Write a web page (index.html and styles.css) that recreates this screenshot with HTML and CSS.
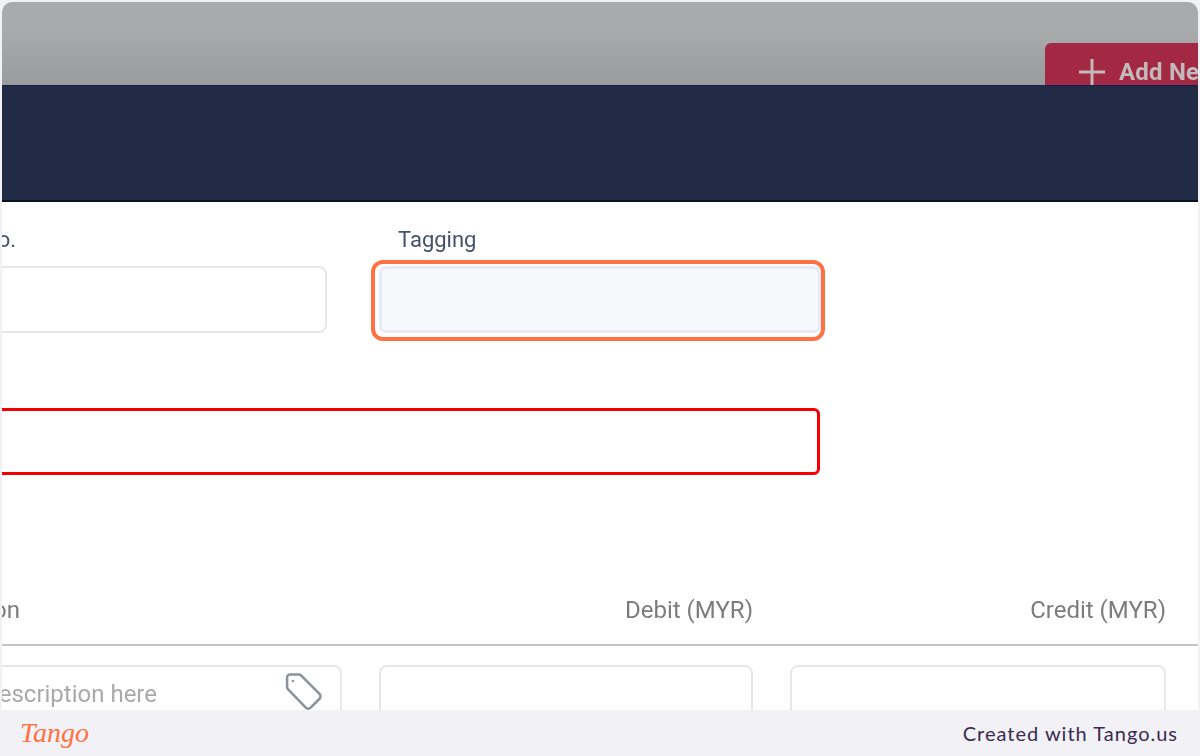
FILE: index.html
```html
<!DOCTYPE html>
<html lang="en">
<head>
<meta charset="utf-8">
<title>Tagging</title>
<link rel="stylesheet" href="styles.css">
</head>
<body>
<div class="frame">
  <main class="screen">
    <header class="dim-bar">
      <button class="add-btn" type="button">
        <svg class="plus" width="26" height="26" viewBox="0 0 26 26" aria-hidden="true"><path d="M13 0V26M0 13H26" fill="none" stroke="#c3b9bb" stroke-width="3"/></svg>
        <span>Add New</span>
      </button>
    </header>
    <div class="navy-bar"></div>
    <section class="form">
      <div class="form-row">
        <div class="field field-ref">
          <label class="label label-clip"><span>Reference No.</span></label>
          <div class="input input-ref"></div>
        </div>
        <div class="field field-tag">
          <label class="label label-tag">Tagging</label>
          <div class="highlight"><div class="input input-focus"></div></div>
        </div>
      </div>
      <div class="input input-error"></div>
      <div class="table-head">
        <div class="th th-desc"><span>Description</span></div>
        <div class="th">Debit (MYR)</div>
        <div class="th">Credit (MYR)</div>
      </div>
      <div class="table-row">
        <div class="input cell cell-desc">
          <span class="placeholder">Enter description here</span>
          <svg class="tag" width="42" height="42" viewBox="0 0 36 36" aria-hidden="true"><path d="M3.5 5.5a2.5 2.5 0 0 1 2.5-2.5h7.5a3 3 0 0 1 2.2.9l15.6 15.7a3 3 0 0 1 0 4.2l-7.6 7.6a3 3 0 0 1-4.2 0L4.4 15.7a3 3 0 0 1-.9-2.2z" fill="none" stroke="#8d929b" stroke-width="2.2" stroke-linejoin="round"/><circle cx="8.5" cy="8.5" r="1.1" fill="#8d929b"/></svg>
        </div>
        <div class="input cell"></div>
        <div class="input cell"></div>
      </div>
    </section>
  </main>
  <footer class="tango-bar">
    <span class="tango-logo">Tango</span>
    <span class="tango-credit">Created with Tango.us</span>
  </footer>
</div>
</body>
</html>
```
FILE: styles.css
```css
* { box-sizing: border-box; }
html, body { margin: 0; padding: 0; height: 756px; overflow: hidden; }
body { background: #f2f1f6; font-family: Roboto, "Liberation Sans", sans-serif; }
.frame { width: 1200px; height: 756px; display: flex; flex-direction: column; }
.screen { flex: 0 0 708px; margin: 2px 2px 0; overflow: hidden; background: #fff; border-radius: 10px 10px 0 0; filter: blur(0.35px); }
.dim-bar { height: 83px; background: linear-gradient(#a9aaab 35%, #9a9b9c); display: flex; justify-content: flex-end; align-items: flex-start; overflow: hidden; padding-top: 41px; }
.add-btn { flex: 0 0 153px; height: 60px; background: #a32843; border: 0; border-radius: 6px 0 0 0; display: flex; align-items: flex-start; gap: 14px; padding: 14px 0 0 34px; color: #c3b9bb; font: 700 24px/30px Roboto, sans-serif; letter-spacing: 0.2px; white-space: nowrap; overflow: hidden; }
.plus { flex: none; margin-top: 2px; }
.navy-bar { height: 117px; background: #212b46; border-top: 1px solid #15204a; border-bottom: 2px solid #0d1220; }
.form { padding-top: 25px; }
.form-row { display: flex; gap: 44px; }
.field { display: flex; flex-direction: column; min-width: 0; }
.field-ref { flex: 0 0 325px; }
.label { font-size: 22px; line-height: 26px; color: #46506b; height: 39px; }
.label-clip { display: flex; justify-content: flex-end; padding-right: 311px; white-space: nowrap; }
.label-tag { padding-left: 27px; }
.input { border: 2px solid #e6e7ea; border-radius: 8px; background: #fff; }
.input-ref { height: 67px; margin-left: -40px; }
.field-tag { flex: 0 0 454px; }
.highlight { height: 81px; margin-top: -6px; border: 4px solid #ff7142; border-radius: 12px; padding: 2px 0 0 4px; }
.input-focus { width: 442px; height: 67px; background: #f6f8fc; border: 3px solid #e6eaf3; border-radius: 7px; }
.input-error { width: 858px; height: 67px; margin: 67px 0 0 -40px; border: 3px solid #f40000; border-radius: 6px; }
.table-head { display: grid; grid-template-columns: 340px 374px 376px; column-gap: 37px; margin-top: 120px; height: 51px; border-bottom: 2px solid #c4c4c4; }
.th { font-size: 24px; line-height: 30px; color: #7c7c7c; text-align: right; white-space: nowrap; }
.th-desc { display: flex; justify-content: flex-end; padding-right: 322px; }
.table-row { display: grid; grid-template-columns: 340px 374px 376px; column-gap: 37px; margin-top: 19px; }
.cell { height: 90px; border-width: 2px; }
.cell-desc { display: flex; align-items: flex-start; justify-content: flex-end; gap: 126px; margin-left: -40px; padding: 12px 15px 0 0; }
.placeholder { font-size: 24px; line-height: 30px; color: #a9a9a9; white-space: nowrap; }
.tag { flex: none; margin-top: -8px; }
.tango-bar { flex: 0 0 46px; display: flex; justify-content: space-between; align-items: center; padding: 0 22px 0 20px; background: #f2f1f6; }
.tango-logo { font: italic 400 28px/46px "Liberation Serif", serif; color: #ff7142; }
.tango-credit { font: 400 20px/44px Lato, sans-serif; color: #3a2a52; letter-spacing: 1px; }
```
